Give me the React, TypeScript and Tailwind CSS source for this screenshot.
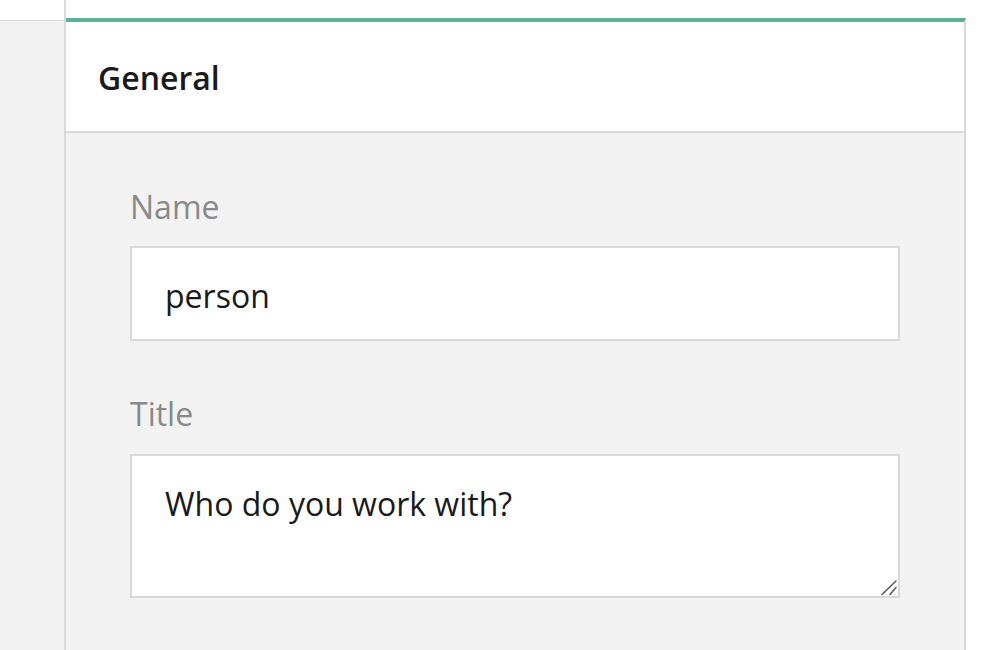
import { useState } from 'react';

export default function App() {
  const [name, setName] = useState('person');
  const [title, setTitle] = useState('Who do you work with?');

  return (
    <div
      className="flex h-[650px] w-[998px] overflow-hidden bg-white"
      style={{ fontFamily: '"Open Sans", "Noto Sans", sans-serif' }}
    >
      {/* Left rail */}
      <div className="flex w-[66px] shrink-0 flex-col border-r-2 border-[#d9d9d9]">
        <div className="h-[21px] border-b border-[#d9d9d9] bg-white" />
        <div className="flex-1 bg-[#f2f2f2]" />
      </div>

      {/* Settings panel */}
      <div className="mt-[18px] flex w-[900px] shrink-0 flex-col border-t-4 border-r-2 border-t-[#5bb095] border-r-[#d9d9d9]">
        <div className="flex h-[111px] items-center border-b-2 border-[#d9d9d9] bg-white pl-[32px] pt-[2px]">
          <h2 className="text-[32px] font-semibold leading-none text-[#1a1a1a]">General</h2>
        </div>

        <div className="flex-1 bg-[#f2f2f2] px-[64px] pt-[50px]">
          <label className="block">
            <span className="block pt-[2px] text-[32px] leading-[44px] text-[#898989]">Name</span>
            <input
              value={name}
              onChange={(e) => setName(e.target.value)}
              className="mt-[17px] block h-[95px] w-full border-2 border-[#d9d9d9] bg-white px-[33px] pt-[3px] text-[32px] text-[#1a1a1a] outline-none"
            />
          </label>

          <label className="mt-[49px] block">
            <span className="block pt-[2px] text-[32px] leading-[44px] text-[#898989]">Title</span>
            <div className="relative mt-[18px]">
              <textarea
                value={title}
                onChange={(e) => setTitle(e.target.value)}
                className="block h-[144px] w-full resize-y border-2 border-[#d9d9d9] bg-white px-[33px] pt-[24px] text-[32px] leading-normal text-[#1a1a1a] outline-none"
              />
              {/* resize grip */}
              <svg
                className="pointer-events-none absolute bottom-[2px] right-[2px] bg-white"
                width="18"
                height="18"
                viewBox="0 0 18 18"
              >
                <path d="M2 16.5 L16 3" stroke="#5a5a5a" strokeWidth="1.6" strokeLinecap="round" />
                <path d="M10 16.5 L16 9.5" stroke="#5a5a5a" strokeWidth="1.6" strokeLinecap="round" />
              </svg>
            </div>
          </label>
        </div>
      </div>
    </div>
  );
}
